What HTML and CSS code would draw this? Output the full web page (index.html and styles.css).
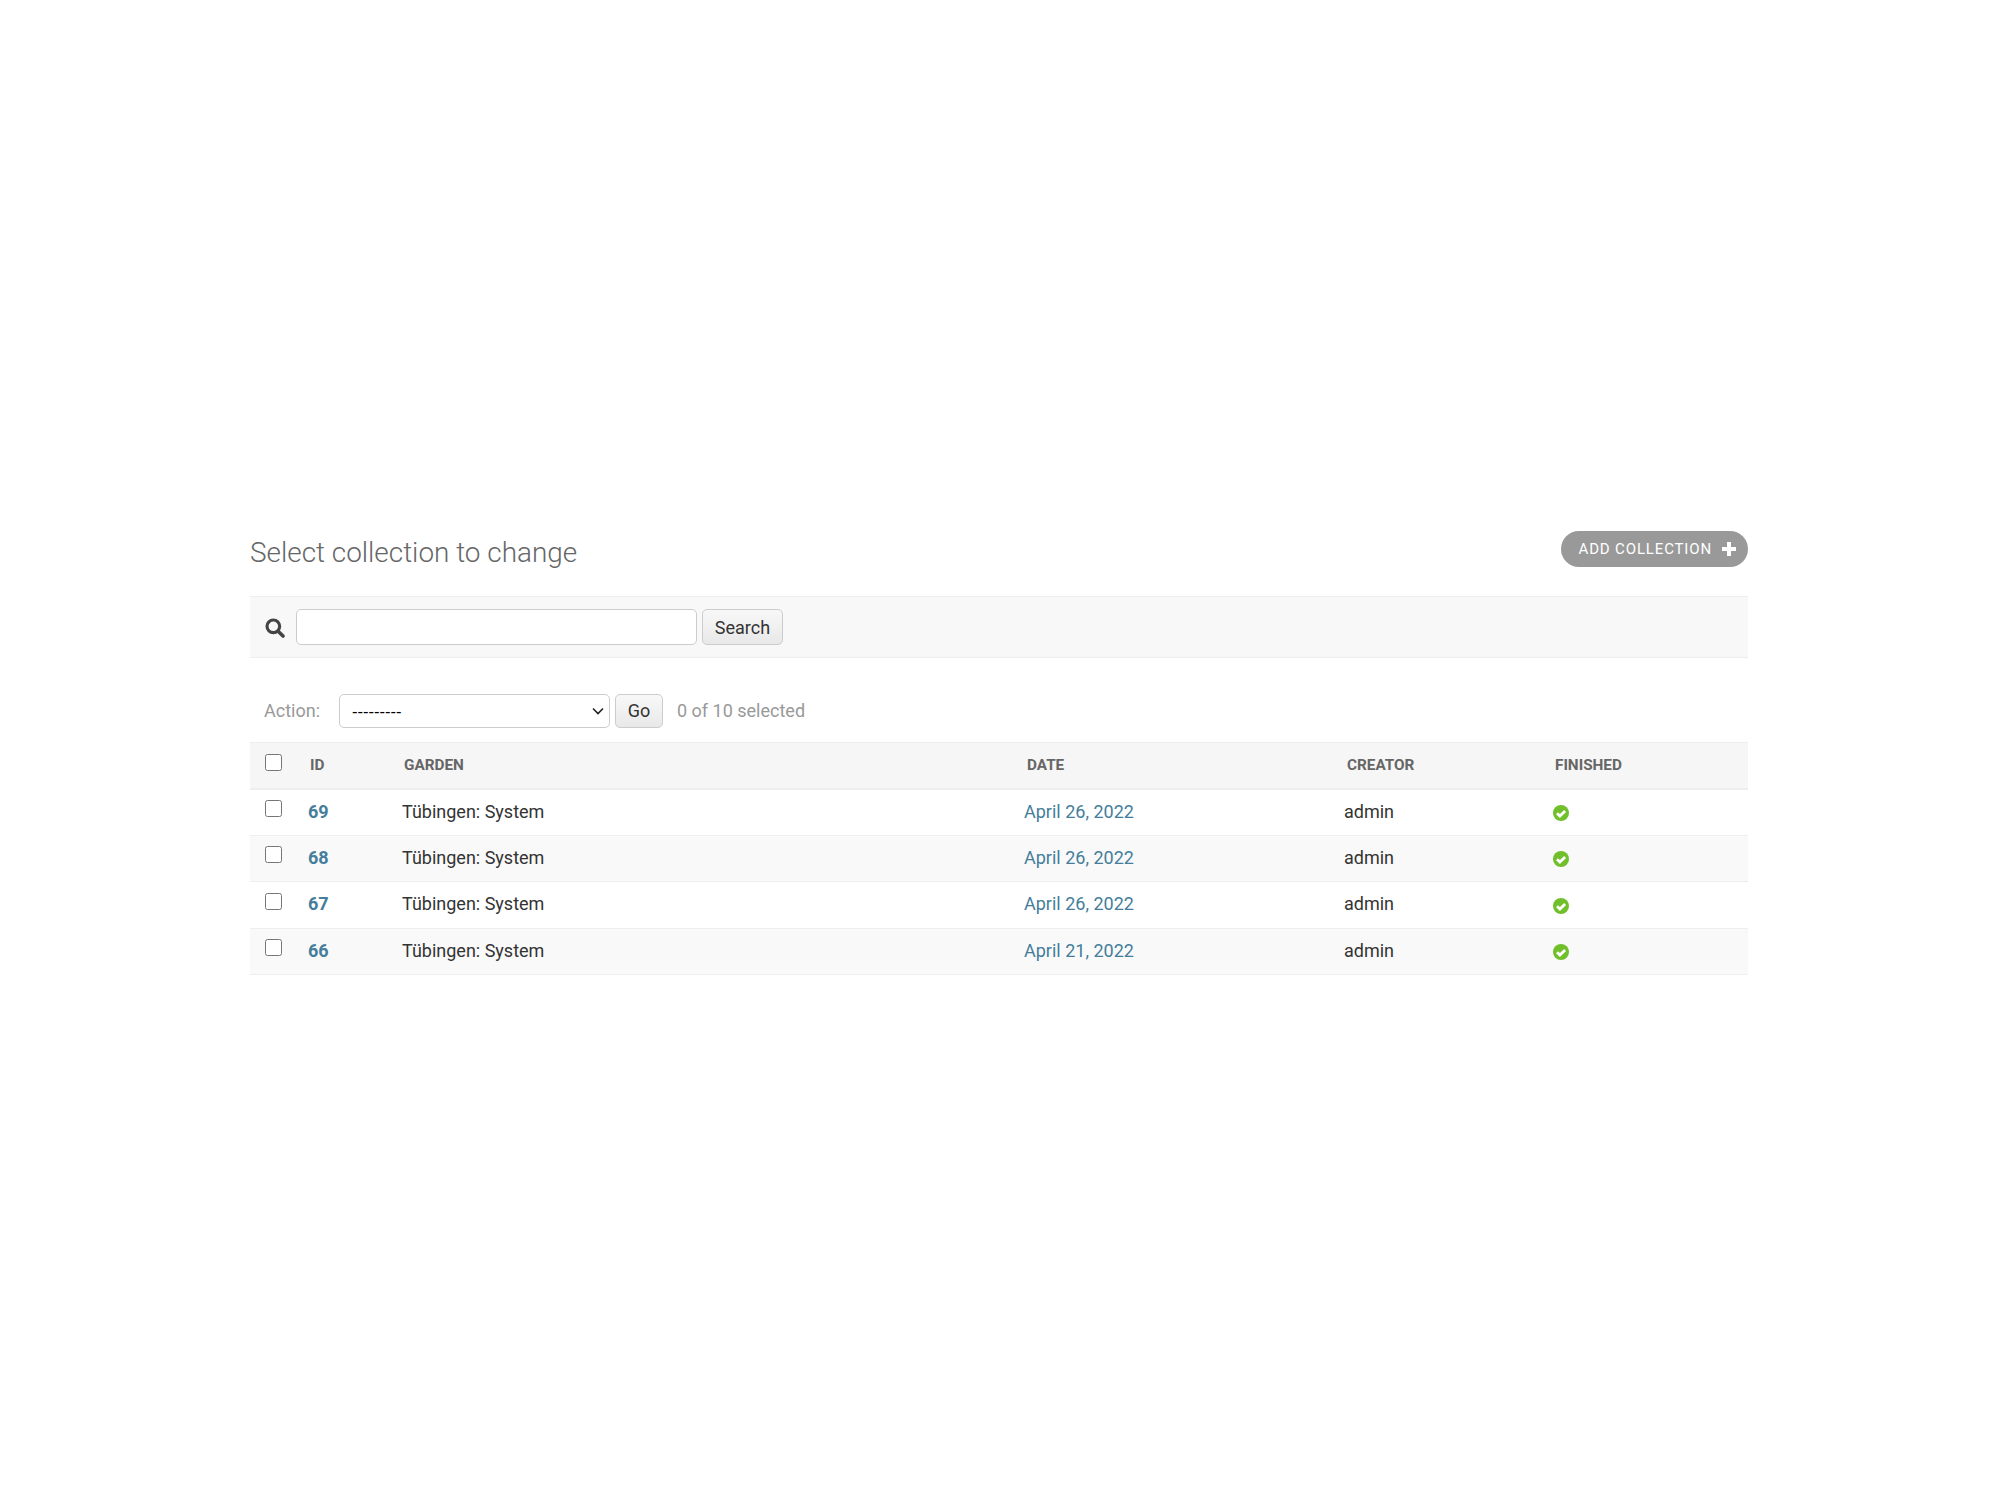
FILE: index.html
```html
<!DOCTYPE html>
<html lang="en">
<head>
    <meta charset="UTF-8">
    <title>Select collection to change</title>
    <link rel="stylesheet" href="styles.css">
</head>
<body>
    <div class="content">
        <div class="page-head">
            <h1>Select collection to change</h1>
            <a class="addlink" href="#">ADD COLLECTION
                <svg class="plus" viewBox="0 0 14 14"><path d="M5 0h4v5h5v4H9v5H5V9H0V5h5z"/></svg>
            </a>
        </div>

        <div class="toolbar">
            <svg class="search-icon" viewBox="0 0 18 18"><circle cx="7.5" cy="7.5" r="5.7" fill="none" stroke="#444" stroke-width="2.8"/><path d="M11.6 11.6l4.6 4.6" stroke="#444" stroke-width="3.2" stroke-linecap="round"/></svg>
            <input class="search-input" type="text">
            <button class="btn search-btn" type="button">Search</button>
        </div>

        <div class="actions">
            <span class="action-label">Action:</span>
            <select class="action-select"><option>---------</option></select>
            <button class="btn go-btn" type="button">Go</button>
            <span class="counter">0 of 10 selected</span>
        </div>

        <table class="results">
            <thead>
                <tr>
                    <th class="col-check"><input type="checkbox"></th>
                    <th class="col-id">ID</th>
                    <th class="col-garden">GARDEN</th>
                    <th class="col-date th-wide">DATE</th>
                    <th class="col-creator th-wide">CREATOR</th>
                    <th class="th-wide">FINISHED</th>
                </tr>
            </thead>
            <tbody>
                <tr>
                    <td class="col-check"><input type="checkbox"></td>
                    <td class="cell-id"><a href="#">69</a></td>
                    <td>Tübingen: System</td>
                    <td><a href="#">April 26, 2022</a></td>
                    <td>admin</td>
                    <td><svg class="yes" viewBox="0 0 16 16"><circle cx="8" cy="8" r="8" fill="#70bf2b"/><path d="M4 8.2l2.9 2.9 5.2-5.2" fill="none" stroke="#fff" stroke-width="2.8"/></svg></td>
                </tr>
                <tr>
                    <td class="col-check"><input type="checkbox"></td>
                    <td class="cell-id"><a href="#">68</a></td>
                    <td>Tübingen: System</td>
                    <td><a href="#">April 26, 2022</a></td>
                    <td>admin</td>
                    <td><svg class="yes" viewBox="0 0 16 16"><circle cx="8" cy="8" r="8" fill="#70bf2b"/><path d="M4 8.2l2.9 2.9 5.2-5.2" fill="none" stroke="#fff" stroke-width="2.8"/></svg></td>
                </tr>
                <tr>
                    <td class="col-check"><input type="checkbox"></td>
                    <td class="cell-id"><a href="#">67</a></td>
                    <td>Tübingen: System</td>
                    <td><a href="#">April 26, 2022</a></td>
                    <td>admin</td>
                    <td><svg class="yes" viewBox="0 0 16 16"><circle cx="8" cy="8" r="8" fill="#70bf2b"/><path d="M4 8.2l2.9 2.9 5.2-5.2" fill="none" stroke="#fff" stroke-width="2.8"/></svg></td>
                </tr>
                <tr>
                    <td class="col-check"><input type="checkbox"></td>
                    <td class="cell-id"><a href="#">66</a></td>
                    <td>Tübingen: System</td>
                    <td><a href="#">April 21, 2022</a></td>
                    <td>admin</td>
                    <td><svg class="yes" viewBox="0 0 16 16"><circle cx="8" cy="8" r="8" fill="#70bf2b"/><path d="M4 8.2l2.9 2.9 5.2-5.2" fill="none" stroke="#fff" stroke-width="2.8"/></svg></td>
                </tr>
            </tbody>
        </table>
    </div>
</body>
</html>
```

FILE: styles.css
```css
html, body {
    margin: 0;
    padding: 0;
    background: #fff;
    font-family: Roboto, "Liberation Sans", sans-serif;
    color: #333;
}

a {
    color: #447e9b;
    text-decoration: none;
}

.content {
    width: 1498px;
    margin-left: 250px;
    padding-top: 531px;
}

.page-head {
    display: flex;
    justify-content: space-between;
    align-items: flex-start;
    height: 65px;
}

h1 {
    margin: 1px 0 0;
    font-size: 27.9px;
    line-height: 42px;
    font-weight: 300;
    color: #666;
}

.addlink {
    display: flex;
    align-items: center;
    gap: 10px;
    height: 36px;
    padding: 0 12px 0 18px;
    border-radius: 18px;
    background: #999;
    color: #fff;
    font-size: 15px;
    letter-spacing: 0.85px;
}

.plus {
    width: 14px;
    height: 14px;
    fill: #fff;
}

.toolbar {
    display: flex;
    align-items: center;
    height: 62px;
    box-sizing: border-box;
    border-top: 1px solid #eee;
    border-bottom: 1px solid #eee;
    background: #f8f8f8;
}

.search-icon {
    width: 20px;
    height: 20px;
    margin: 2px 0 0 15px;
}

.search-input {
    width: 401px;
    height: 36px;
    box-sizing: border-box;
    margin-left: 11px;
    border: 1px solid #ccc;
    border-radius: 5px;
    background: #fff;
}

.btn {
    box-sizing: border-box;
    height: 36px;
    padding: 0;
    border: 1px solid #ccc;
    border-radius: 5px;
    background: linear-gradient(#f8f8f8, #e8e8e8);
    color: #333;
    font-family: inherit;
    font-size: 18px;
}

.search-btn {
    width: 81px;
    margin-left: 5px;
}

.actions {
    display: flex;
    align-items: center;
    height: 84px;
    box-sizing: border-box;
    padding: 21px 0 0 14px;
    font-size: 18px;
    color: #999;
}

.action-select {
    appearance: none;
    width: 271px;
    height: 34px;
    margin-left: 19px;
    padding-left: 12px;
    border: 1px solid #ccc;
    border-radius: 5px;
    background: #fff url("data:image/svg+xml,%3Csvg xmlns='http://www.w3.org/2000/svg' width='12' height='8'%3E%3Cpath d='M1 1.5l5 5 5-5' fill='none' stroke='%23222' stroke-width='1.6'/%3E%3C/svg%3E") no-repeat right 5px center;
    color: #000;
    font-family: "Liberation Sans", sans-serif;
    font-size: 16.5px;
}

.go-btn {
    width: 48px;
    height: 34px;
    margin-left: 5px;
}

.counter {
    margin-left: 14px;
}

.results {
    width: 100%;
    border-collapse: collapse;
    table-layout: fixed;
    font-size: 18px;
}

.results th {
    height: 46px;
    box-sizing: border-box;
    padding: 0 0 0 2px;
    border-top: 1px solid #eee;
    border-bottom: 2px solid #eee;
    background: #f6f6f6;
    color: #666;
    font-size: 15.3px;
    font-weight: 700;
    text-align: left;
}

.results th.col-check {
    padding-left: 0;
}

.results th.th-wide {
    padding-left: 3px;
}

.results td {
    height: 46.5px;
    box-sizing: border-box;
    padding: 0 0 2px;
    border-bottom: 1px solid #eee;
}

.results tbody tr:nth-child(even) {
    background: #f9f9f9;
}

.results input[type="checkbox"] {
    width: 17px;
    height: 17px;
    margin: 0 0 6px 15px;
    vertical-align: middle;
}

.col-check { width: 58px; }
.col-id { width: 94px; }
.col-garden { width: 622px; }
.col-date { width: 320px; }
.col-creator { width: 208px; }

.cell-id a {
    font-weight: 700;
}

.yes {
    display: block;
    width: 16px;
    height: 16px;
    margin: 4px 0 0 1px;
}
```
